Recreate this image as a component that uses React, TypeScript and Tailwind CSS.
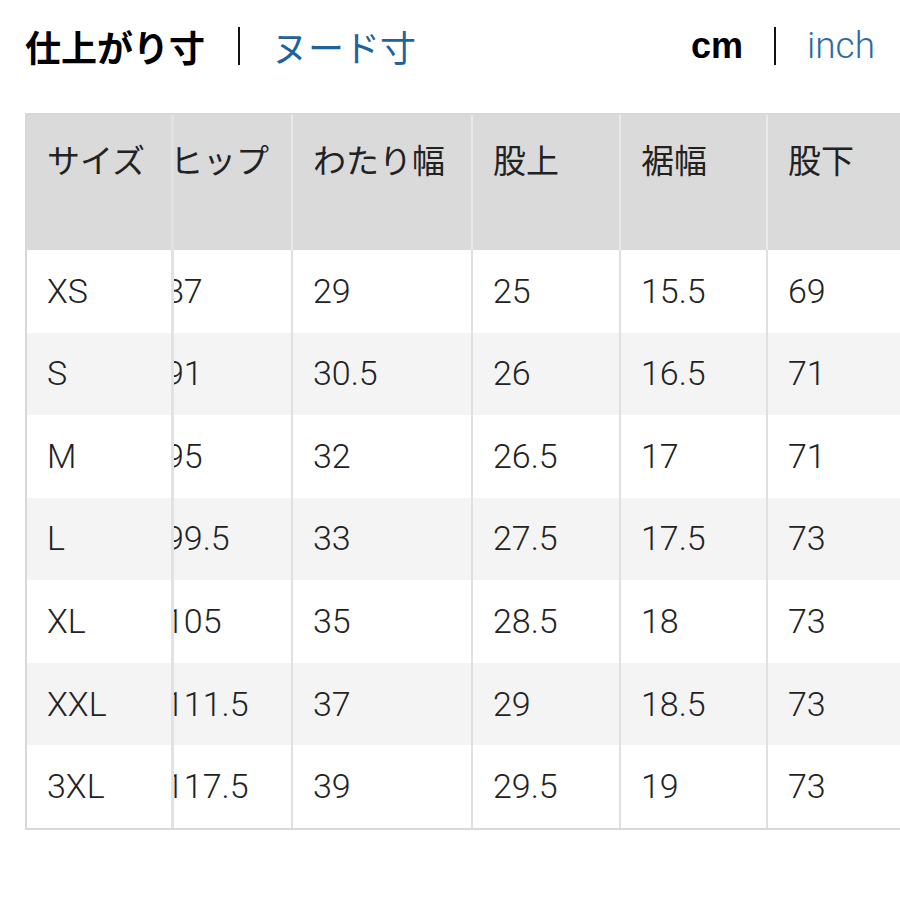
const headers = ["ヒップ", "わたり幅", "股上", "裾幅", "股下"];

const rows: [string, string[]][] = [
  ["XS", ["87", "29", "25", "15.5", "69"]],
  ["S", ["91", "30.5", "26", "16.5", "71"]],
  ["M", ["95", "32", "26.5", "17", "71"]],
  ["L", ["99.5", "33", "27.5", "17.5", "73"]],
  ["XL", ["105", "35", "28.5", "18", "73"]],
  ["XXL", ["111.5", "37", "29", "18.5", "73"]],
  ["3XL", ["117.5", "39", "29.5", "19", "73"]],
];

const jp = { fontFamily: '"Noto Sans CJK JP", sans-serif' };
const num = { fontFamily: 'Roboto, "Noto Sans CJK JP", sans-serif' };

export default function App() {
  return (
    <div className="w-[900px] h-[900px] overflow-hidden bg-white text-[#222]">
      {/* toggles */}
      <div className="flex justify-between pl-[25px] pr-[25px] pt-[26px] h-[113px] items-start">
        <div className="flex items-center" style={jp}>
          <span className="text-[36px] font-bold leading-[40px] text-black">仕上がり寸</span>
          <span className="ml-[33px] mr-[32px] w-[2px] h-[38px] bg-[#111]" />
          <span className="text-[36px] leading-[40px] text-[#1f62a0]">ヌード寸</span>
        </div>
        <div className="flex items-center">
          <span
            className="text-[36px] font-bold leading-[40px] text-black"
            style={{ fontFamily: '"Liberation Sans", Arial, sans-serif' }}
          >
            cm
          </span>
          <span className="mx-[31px] w-[2px] h-[38px] bg-[#111]" />
          <span className="text-[37px] font-light leading-[40px] text-[#2d6aa3]" style={num}>
            inch
          </span>
        </div>
      </div>

      {/* table */}
      <div className="ml-[25px] flex border-l-2 border-b-2 border-t-2 border-[#d8d8d8] w-[900px]">
        <div className="w-[147px] shrink-0 border-r-[3px] border-[#e2e2e2]">
          <div className="h-[135px] bg-[#dadada] pl-[20px] pt-[24px] text-[33px] leading-[40px]" style={jp}>
            サイズ
          </div>
          {rows.map(([size], i) => (
            <div
              key={size}
              className={`h-[82.57px] flex items-center pl-[20px] text-[34px] font-light ${i % 2 ? "bg-[#f4f4f4]" : "bg-white"}`}
              style={num}
            >
              {size}
            </div>
          ))}
        </div>

        <div className="flex-1 overflow-hidden">
          <div className="-ml-[29px] grid grid-cols-[146px_180px_148px_147px_200px]">
            {headers.map((h, c) => (
              <div
                key={h}
                className={`h-[135px] bg-[#dadada] pt-[24px] text-[33px] leading-[40px] border-[#eaeaea] ${c === 0 ? "pl-[25px]" : "border-l-2 pl-[20px]"}`}
                style={jp}
              >
                {h}
              </div>
            ))}
            {rows.map(([size, vals], i) =>
              vals.map((v, c) => (
                <div
                  key={size + c}
                  className={`h-[82.57px] flex items-center text-[34px] font-light border-[#e0e0e0] ${i % 2 ? "bg-[#f4f4f4]" : "bg-white"} ${c === 0 ? "pl-[20px]" : "border-l-2 pl-[20px]"}`}
                  style={num}
                >
                  {v}
                </div>
              ))
            )}
          </div>
        </div>
      </div>
    </div>
  );
}
